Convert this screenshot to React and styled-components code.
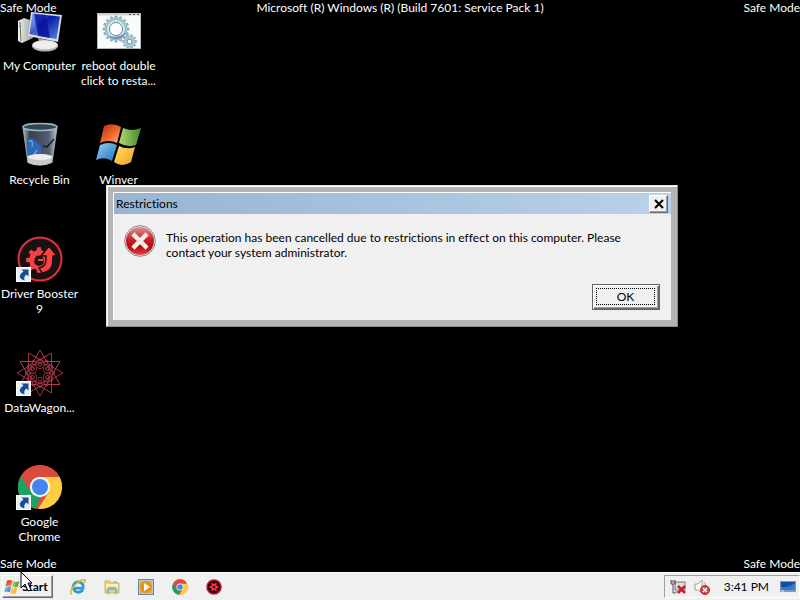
import React from "react";
import styled, { createGlobalStyle, css } from "styled-components";

const GlobalStyle = createGlobalStyle`
  * { box-sizing: border-box; }
  body {
    margin: 0;
    background: #000;
    font-family: Lato, "Noto Sans", sans-serif;
    font-size: 12px;
    line-height: 15px;
    font-variant-ligatures: none;
  }
  button { font: inherit; font-variant-ligatures: none; color: inherit; cursor: default; }
`;

const Screen = styled.div`
  display: flex;
  flex-direction: column;
  min-height: 100vh;
  overflow: hidden;
`;

const Desktop = styled.main`
  position: relative;
  flex: 1;
  background: #000;
  color: #fff;
`;

const Watermark = styled.div`
  position: absolute;
  left: 0;
  right: 0;
  ${(p) => (p.$edge === "top" ? "top: 0;" : "bottom: 1px;")}
  display: flex;
  justify-content: space-between;
  pointer-events: none;
  white-space: nowrap;
`;

const IconGrid = styled.div`
  display: grid;
  grid-auto-flow: column;
  grid-template-rows: repeat(5, 114px);
  grid-auto-columns: 79px;
  height: 0;
`;

const Shortcut = styled.button`
  display: flex;
  flex-direction: column;
  align-items: center;
  justify-content: flex-start;
  gap: 3px;
  padding: 7px 0 0;
  border: 0;
  background: none;
  text-align: center;
`;

const ShortcutLabel = styled.span`
  white-space: pre;
`;

const Picture = styled.svg`
  display: block;
  flex: none;
  width: ${(p) => p.$size}px;
  height: ${(p) => p.$size}px;
`;

const raised = css`
  border: 1px solid;
  border-color: #fff #696969 #696969 #fff;
  box-shadow: inset -1px -1px #a0a0a0;
`;

const Dialog = styled.section`
  position: absolute;
  left: 106px;
  top: 185px;
  width: 572px;
  padding: 6px;
  border: 1px solid;
  border-color: #e3e3e3 #8a8a8a #8a8a8a #e3e3e3;
  background: #b4b4b4;
  box-shadow: inset 1px 1px #fff;
  color: #000;
`;

const DialogInner = styled.div`
  border: 1px solid #fff;
  border-width: 1px 0 0 1px;
  background: #f0f0f0;
`;

const TitleBar = styled.header`
  display: flex;
  align-items: center;
  justify-content: space-between;
  height: 21px;
  padding: 0 3px 0 2px;
  background: linear-gradient(90deg, #99b4d1, #b9d1ea);
`;

const DialogTitle = styled.h1`
  margin: 0;
  font-size: 12px;
  font-weight: 400;
`;

const CloseButton = styled.button`
  ${raised}
  display: flex;
  align-items: center;
  justify-content: center;
  width: 19px;
  height: 18px;
  padding: 0;
  background: #f0f0f0;
`;

const DialogBody = styled.div`
  display: flex;
  gap: 10px;
  padding: 11px 40px 0 10px;
`;

const Message = styled.p`
  margin: 0;
  padding-top: 5px;
`;

const DialogActions = styled.footer`
  display: flex;
  justify-content: flex-end;
  padding: 24px 11px 10px;
`;

const OkButton = styled.button`
  display: flex;
  width: 68px;
  height: 26px;
  padding: 2px;
  border: 1px solid #646464;
  background: #f0f0f0;
  box-shadow: inset 1px 1px #fff, inset -1px -1px #696969, inset -2px -2px #a0a0a0;
`;

const FocusRing = styled.span`
  flex: 1;
  margin: 1px 2px 2px 1px;
  border: 1px dotted #000;
  line-height: 16px;
`;

const Taskbar = styled.nav`
  display: flex;
  align-items: center;
  height: 28px;
  padding-left: 2px;
  border-top: 1px solid #fff;
  background: #f0f0f0;
  color: #000;
`;

const StartButton = styled.button`
  ${raised}
  display: flex;
  align-items: center;
  gap: 2px;
  width: 51px;
  height: 23px;
  padding: 0 1px;
  background: #f0f0f0;
  font-weight: 700;
`;

const QuickLaunch = styled.div`
  display: flex;
  flex: 1;
  gap: 18px;
  padding-left: 17px;
`;

const QuickButton = styled.button`
  padding: 0;
  border: 0;
  background: none;
`;

const Tray = styled.div`
  display: flex;
  align-items: center;
  height: 23px;
  padding-left: 5px;
  gap: 8px;
  border: 1px solid;
  border-color: #a0a0a0 #fff #fff #a0a0a0;
`;

const Clock = styled.time`
  margin: 0 3px 0 6px;
  white-space: nowrap;
`;

const ShowDesktop = styled(QuickButton)`
  margin-right: 3px;
`;

const Cursor = styled.svg`
  position: absolute;
  left: 20px;
  bottom: 8px;
  width: 13px;
  height: 21px;
  pointer-events: none;
`;

const Page = styled.div`
  position: relative;
`;

const gearPath = (cx, cy, outer, inner, teeth) => {
  const pts = [];
  for (let i = 0; i < teeth; i++) {
    [[-0.3, inner], [-0.2, outer], [0.2, outer], [0.3, inner]].forEach(([o, r]) => {
      const a = ((i + o) / teeth) * Math.PI * 2;
      pts.push(`${(cx + r * Math.cos(a)).toFixed(2)},${(cy + r * Math.sin(a)).toFixed(2)}`);
    });
  }
  return `M${pts.join("L")}Z`;
};

const ShortcutArrow = () => (
  <g>
    <rect x="0.5" y="32.5" width="14" height="14" fill="#e8eef5" stroke="#fff" />
    <path d="M5.5 34.5H12.5V41.5L10.5 39.5C8 41 8 43 8.5 45.5C3 44 2 40 7.5 36.5Z" fill="#164d91" />
  </g>
);

const ComputerIcon = () => (
  <Picture $size={48} viewBox="0 0 48 48" aria-hidden="true">
    <defs>
      <linearGradient id="screen" x1="0" y1="0" x2="1" y2="1">
        <stop offset="0" stopColor="#6f9cf2" /><stop offset=".32" stopColor="#234bd0" />
        <stop offset=".4" stopColor="#0718a2" /><stop offset="1" stopColor="#5485e2" />
      </linearGradient>
      <linearGradient id="case"><stop stopColor="#f3f3f0" /><stop offset="1" stopColor="#9a9a98" /></linearGradient>
    </defs>
    <path d="M2 14L8 11L17 14V31L6 36L2 34Z" fill="url(#case)" />
    <path d="M4 15L5 34M3 19L5 20" stroke="#66716b" />
    <path d="M22 31L31 33L33 39H24Z" fill="#999" />
    <ellipse cx="29" cy="39" rx="13" ry="5.5" fill="#b5b5b1" />
    <ellipse cx="29" cy="37.7" rx="12.5" ry="4.5" fill="#eeeeea" />
    <path d="M15 5L46 8L42 35L12 29Z" fill="#d8dcdd" />
    <path d="M16.5 6.5L44 9.5L40.5 32L13.5 27Z" fill="url(#screen)" />
    <path d="M16.5 6.5L20 7L23 29L13.5 27Z" fill="#9cbcf5" opacity=".4" />
    <path d="M18 7L30 8L34 31L22 29Z" fill="#0a139a" opacity=".75" />
  </Picture>
);

const BatchIcon = () => (
  <Picture $size={48} viewBox="0 0 48 48" aria-hidden="true">
    <rect x="2.5" y="6.5" width="43" height="35" fill="#f9fbfb" stroke="#b4b8bc" />
    <path d="M3 7.5H45" stroke="#d2d7db" strokeWidth="2" />
    <path d="M34 7.5H36M38 7.5H40M42 7.5H44" stroke="#555" />
    <path d={gearPath(21, 22, 13, 10.5, 16)} fill="#9fc4d2" stroke="#6b8999" strokeWidth=".6" />
    <circle cx="21" cy="22" r="9" fill="#cde6e8" />
    <circle cx="21" cy="22" r="6.5" fill="#fff" stroke="#6d8999" />
    <path d="M14 29C20 35 28 32 31 25C27 29 20 31 14 29Z" fill="#6e93c1" />
    <path d={gearPath(34.5, 34.5, 7, 5, 10)} fill="#a9d0dd" stroke="#678ba2" strokeWidth=".6" />
    <circle cx="34.5" cy="34.5" r="2.4" fill="#fff" stroke="#678ba2" />
  </Picture>
);

const BinIcon = () => (
  <Picture $size={48} viewBox="0 0 48 48" aria-hidden="true">
    <defs><linearGradient id="bin"><stop stopColor="#a8b9c4" /><stop offset=".2" stopColor="#344153" /><stop offset=".75" stopColor="#535e70" /><stop offset="1" stopColor="#bac4ca" /></linearGradient></defs>
    <path d="M7 6H41L36 42Q24 47 12 42Z" fill="url(#bin)" />
    <path d="M11 21Q14 15 19 19L22 23Q26 24 25 30L28 36H12Z" fill="#2e66b8" />
    <path d="M13 20Q18 19 16 26M21 29L18 34" stroke="#6aa0e9" strokeWidth="1.5" fill="none" />
    <path d="M38 18L31 26L27 25" stroke="#101a27" strokeWidth="1.5" fill="none" />
    <path d="M11 35Q24 31 37 35L35 42Q24 47 12 42Z" fill="#c9cbc7" />
    <ellipse cx="24" cy="36" rx="12" ry="3" fill="#eeeeea" />
    <path d="M7 7L12 42M41 7L36 42" stroke="#bccbd2" opacity=".75" />
    <ellipse cx="24" cy="6" rx="17" ry="3.5" fill="#344654" stroke="#9cb7c3" strokeWidth="1.5" />
  </Picture>
);

const WindowsIcon = ({ size = 48 }) => (
  <Picture $size={size} viewBox="0 0 48 48" aria-hidden="true">
    <defs>
      <linearGradient id="flagRed" x2="1" y2="1"><stop stopColor="#b82914" /><stop offset=".55" stopColor="#ef672d" /><stop offset="1" stopColor="#ffb183" /></linearGradient>
      <linearGradient id="flagGreen" x2="1"><stop stopColor="#b1d870" /><stop offset="1" stopColor="#438c2c" /></linearGradient>
      <linearGradient id="flagBlue" x2="1" y2="1"><stop stopColor="#96d3f4" /><stop offset="1" stopColor="#1b70bd" /></linearGradient>
      <linearGradient id="flagYellow" x2="1" y2="1"><stop stopColor="#ffdc62" /><stop offset="1" stopColor="#f4a323" /></linearGradient>
    </defs>
    <path d="M9 5Q18 1 26 6L22 22Q14 18 5 22Z" fill="url(#flagRed)" />
    <path d="M28 7Q37 11 46 7L41 24Q33 27 24 22Z" fill="url(#flagGreen)" />
    <path d="M5 24Q14 20 22 24L17 40Q9 35 1 39Z" fill="url(#flagBlue)" />
    <path d="M24 25Q32 29 40 26L36 41Q27 47 19 41Z" fill="url(#flagYellow)" />
  </Picture>
);

const BoosterIcon = () => (
  <Picture $size={48} viewBox="0 0 48 48" aria-hidden="true">
    <circle cx="24" cy="24" r="21.5" fill="#171112" stroke="#e92d42" strokeWidth="2" />
    <path d={gearPath(23, 25, 13, 10, 8)} fill="#f04146" />
    <circle cx="23" cy="25" r="4.5" fill="#171112" />
    <path d="M26 38C37 36 37 29 37 21H41L33 11L25 21H30C30 28 30 31 23 33Z" fill="#ff4047" stroke="#171112" strokeWidth="1.5" />
    <path d="M19 26A4 4 0 1 0 27 26" fill="none" stroke="#171112" strokeWidth="2" />
    <path d="M22 25H27" stroke="#f04146" strokeWidth="2" />
    <ShortcutArrow />
  </Picture>
);

const WagonIcon = () => (
  <Picture $size={48} viewBox="0 0 48 48" aria-hidden="true">
    <g fill="none" stroke="#b53b4c" strokeWidth=".9">
      {Array.from({ length: 12 }, (_, i) => (
        <g key={i} transform={`rotate(${i * 30} 24 24)`}>
          <path d="M24 1L16 15M24 1L32 15" />
          <path d="M24 9L18 17M24 9L30 17" stroke="#8c2d3b" />
        </g>
      ))}
      {Array.from({ length: 6 }, (_, i) => (
        <g key={i} transform={`rotate(${i * 60} 24 24)`}>
          <circle cx="24" cy="15" r="4.5" stroke="#a33242" />
          <circle cx="24" cy="15" r="2" />
        </g>
      ))}
    </g>
    <ShortcutArrow />
  </Picture>
);

const ChromeMark = ({ size = 48, shortcut }) => (
  <Picture $size={size} viewBox={shortcut ? "0 0 48 48" : "1 1 46 46"} aria-hidden="true">
    <circle cx="24" cy="24" r="22" fill="#e34b40" />
    <path d="M5 13L15 29L24 35L20 46A22 22 0 0 1 5 13Z" fill="#1da261" />
    <path d="M24 14H43.6A22 22 0 0 1 22 46L33 29Z" fill="#ffcd42" />
    <path d="M5 13L15 29L14 20L24 14H43.6A22 22 0 0 0 5 13Z" fill="#dc493d" />
    <circle cx="24" cy="24" r="10.2" fill="#f3f5f5" />
    <circle cx="24" cy="24" r="8" fill="#4285ed" />
    {shortcut && <ShortcutArrow />}
  </Picture>
);

const ErrorIcon = () => (
  <Picture $size={32} viewBox="0 0 32 32" aria-hidden="true">
    <defs><linearGradient id="error" x2="0" y2="1"><stop stopColor="#df9493" /><stop offset=".45" stopColor="#c82029" /><stop offset=".7" stopColor="#b90710" /><stop offset="1" stopColor="#dc474b" /></linearGradient></defs>
    <circle cx="16" cy="16" r="15.3" fill="#f6eeee" stroke="#838383" />
    <circle cx="16" cy="16" r="14" fill="url(#error)" />
    <path d="M10.5 10.5L21.5 21.5M21.5 10.5L10.5 21.5" stroke="#f5ece9" strokeWidth="4.5" strokeLinecap="square" />
  </Picture>
);

const ExplorerIcon = () => (
  <Picture $size={16} viewBox="0 0 16 16" aria-hidden="true">
    <path d="M13 11Q9 15 5 12Q1 8 5 4Q10 1 13 6V9H5" fill="none" stroke="#2c9bd4" strokeWidth="2.8" />
    <path d="M5 7.5H12" stroke="#b8e9fb" />
    <path d="M2 15Q-2 14 4 7Q12-1 15 1Q16 2 13 4" fill="none" stroke="#e2b52e" strokeWidth="1.6" />
  </Picture>
);

const FolderIcon = () => (
  <Picture $size={16} viewBox="0 0 16 16" aria-hidden="true">
    <path d="M1 2H6L7 4H15V14H1Z" fill="#edce72" stroke="#d6b35a" />
    <path d="M2 5H14V10H2Z" fill="#fff0a8" />
    <path d="M3 15V10Q3 8 5 8H11Q13 8 13 10V15H11V11H5V15Z" fill="#72bddc" />
    <path d="M9 3H13" stroke="#61a6c4" />
  </Picture>
);

const PlayerIcon = () => (
  <Picture $size={16} viewBox="0 0 16 16" aria-hidden="true">
    <rect x="0.5" y="0.5" width="15" height="15" fill="#b9cad4" stroke="#5888ad" />
    <rect x="2" y="2" width="12" height="12" fill="#e6ad4b" />
    <circle cx="8" cy="8" r="6" fill="#ed9010" />
    <path d="M6 4L12 8L6 12Z" fill="#fff" />
  </Picture>
);

const RedGearIcon = () => (
  <Picture $size={16} viewBox="0 0 16 16" aria-hidden="true">
    <circle cx="8" cy="8" r="7" fill="#27080d" stroke="#bb1830" strokeWidth="1.6" />
    <path d={gearPath(8, 8, 4.5, 3, 6)} fill="#f13346" />
    <circle cx="8" cy="8" r="1.3" fill="#4a1018" />
  </Picture>
);

const NetworkIcon = () => (
  <Picture $size={16} viewBox="0 0 16 16" aria-hidden="true">
    <rect x="5" y="3" width="10" height="8" fill="#ddd" stroke="#777" />
    <path d="M1 1V5H5V1M2 1V4M4 1V4M3 5V14H6" fill="none" stroke="#555" />
    <path d="M5 13H10" stroke="#888" />
    <path d="M8 7L15 14M15 7L8 14" stroke="#c51f2d" strokeWidth="2.6" />
  </Picture>
);

const VolumeIcon = () => (
  <Picture $size={16} viewBox="0 0 16 16" aria-hidden="true">
    <path d="M1 5H4L8 1V14L4 11H1Z" fill="#fff" stroke="#999" />
    <path d="M10 3Q12 5 11 7" fill="none" stroke="#aaa" />
    <circle cx="11" cy="11" r="4.5" fill="#d84145" stroke="#a62b2e" />
    <path d="M9 9L13 13M13 9L9 13" stroke="#fff" strokeWidth="1.5" />
  </Picture>
);

const DesktopIcon = () => (
  <Picture $size={16} viewBox="0 0 16 16" aria-hidden="true">
    <path d="M0 2H16V13H0Z" fill="#779bc1" />
    <path d="M1 3H15V11H1Z" fill="#164da0" />
    <path d="M1 8Q8 9 15 4V11H1Z" fill="#3979c6" />
    <path d="M1 12H4" stroke="#e0f0ff" />
  </Picture>
);

const shortcuts = [
  { label: "My Computer", icon: <ComputerIcon /> },
  { label: "Recycle Bin", icon: <BinIcon /> },
  { label: "Driver Booster\n9", icon: <BoosterIcon /> },
  { label: "DataWagon...", icon: <WagonIcon /> },
  { label: "Google\nChrome", icon: <ChromeMark shortcut /> },
  { label: "reboot double\nclick to resta...", icon: <BatchIcon /> },
  { label: "Winver", icon: <WindowsIcon /> },
];

const pinned = [
  ["Internet Explorer", <ExplorerIcon key="i" />],
  ["Windows Explorer", <FolderIcon key="i" />],
  ["Media Player", <PlayerIcon key="i" />],
  ["Google Chrome", <ChromeMark key="i" size={16} />],
  ["Driver Booster", <RedGearIcon key="i" />],
];

export default function App() {
  return (
    <Page>
      <GlobalStyle />
      <Screen>
        <Desktop>
          <IconGrid>
            {shortcuts.map((s) => (
              <Shortcut key={s.label}>
                {s.icon}
                <ShortcutLabel>{s.label}</ShortcutLabel>
              </Shortcut>
            ))}
          </IconGrid>
          <Watermark $edge="top">
            <span>Safe Mode</span>
            <span>Microsoft (R) Windows (R) (Build 7601: Service Pack 1)</span>
            <span>Safe Mode</span>
          </Watermark>
          <Watermark $edge="bottom">
            <span>Safe Mode</span>
            <span>Safe Mode</span>
          </Watermark>
          <Dialog role="alertdialog" aria-labelledby="dialog-title" aria-describedby="dialog-message">
            <DialogInner>
              <TitleBar>
                <DialogTitle id="dialog-title">Restrictions</DialogTitle>
                <CloseButton aria-label="Close">
                  <Picture $size={10} viewBox="0 0 10 10" aria-hidden="true">
                    <path d="M1 1L9 9M9 1L1 9" stroke="#000" strokeWidth="2" />
                  </Picture>
                </CloseButton>
              </TitleBar>
              <DialogBody>
                <ErrorIcon />
                <Message id="dialog-message">
                  This operation has been cancelled due to restrictions in effect on this computer. Please contact your system administrator.
                </Message>
              </DialogBody>
              <DialogActions>
                <OkButton><FocusRing>OK</FocusRing></OkButton>
              </DialogActions>
            </DialogInner>
          </Dialog>
        </Desktop>
        <Taskbar>
          <StartButton><WindowsIcon size={16} />Start</StartButton>
          <QuickLaunch>
            {pinned.map(([name, icon]) => (
              <QuickButton key={name} aria-label={name}>{icon}</QuickButton>
            ))}
          </QuickLaunch>
          <Tray>
            <NetworkIcon />
            <VolumeIcon />
            <Clock>3:41 PM</Clock>
            <ShowDesktop aria-label="Show desktop"><DesktopIcon /></ShowDesktop>
          </Tray>
        </Taskbar>
      </Screen>
      <Cursor viewBox="0 0 13 21" aria-hidden="true">
        <path d="M1 1V17L5 13L8 20L11 19L8 12H12Z" fill="#fff" stroke="#000" />
      </Cursor>
    </Page>
  );
}
